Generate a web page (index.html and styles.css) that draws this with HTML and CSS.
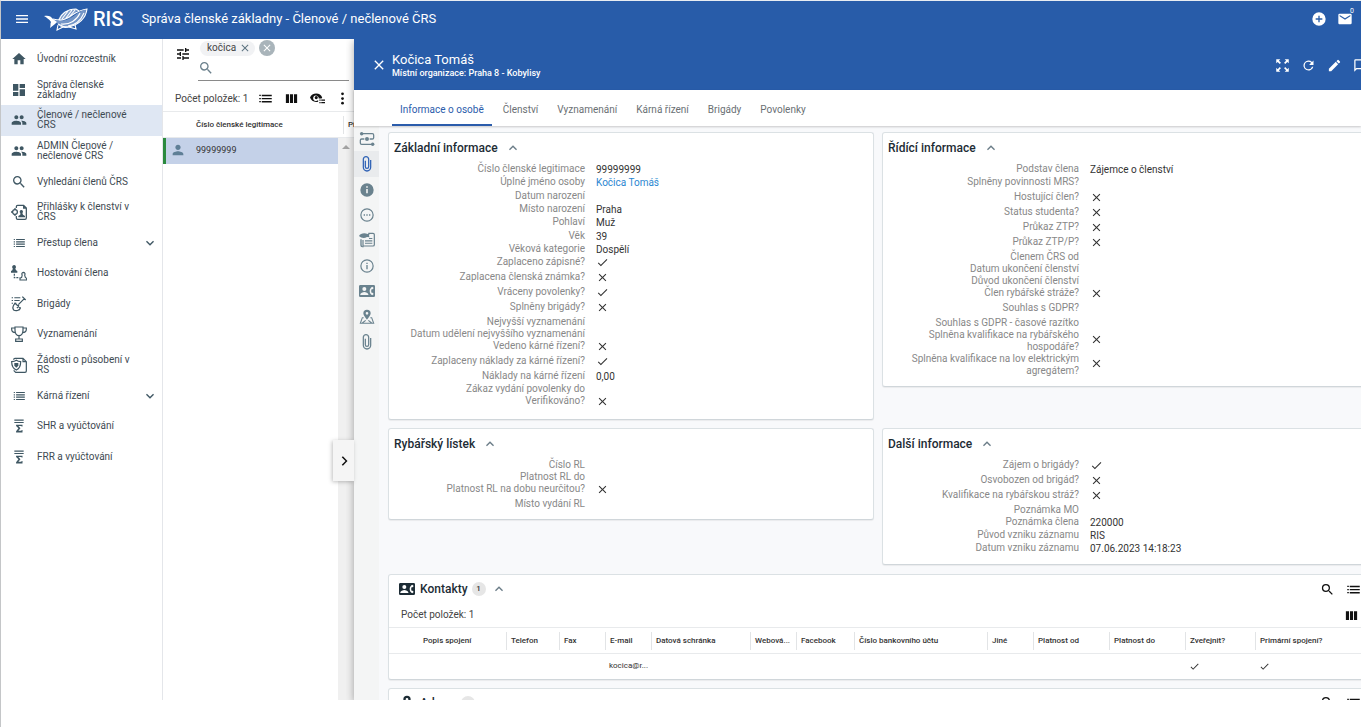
FILE: index.html
```html
<!DOCTYPE html>
<html lang="cs">
<head>
<meta charset="utf-8">
<title>RIS – Správa členské základny</title>
<link rel="stylesheet" href="styles.css">
</head>
<body>
<svg class="defs" aria-hidden="true">
  <symbol id="menu" viewBox="0 0 24 24"><path d="M3 18h18v-2H3v2zm0-5h18v-2H3v2zm0-7v2h18V6H3z"/></symbol>
  <symbol id="home" viewBox="0 0 24 24"><path d="M10 20v-6h4v6h5v-8h3L12 3 2 12h3v8z"/></symbol>
  <symbol id="dash" viewBox="0 0 24 24"><path d="M3 13h8V3H3v10zm0 8h8v-6H3v6zm10 0h8V11h-8v10zm0-18v6h8V3h-8z"/></symbol>
  <symbol id="people" viewBox="0 0 24 24"><path d="M16 11c1.66 0 2.99-1.34 2.99-3S17.66 5 16 5s-3 1.34-3 3 1.34 3 3 3zm-8 0c1.66 0 2.99-1.34 2.99-3S9.66 5 8 5 5 6.34 5 8s1.34 3 3 3zm0 2c-2.33 0-7 1.17-7 3.5V19h14v-2.5c0-2.33-4.67-3.5-7-3.5zm8 0c-.29 0-.62.02-.97.05 1.16.84 1.97 1.97 1.97 3.45V19h6v-2.5c0-2.33-4.67-3.5-7-3.5z"/></symbol>
  <symbol id="person" viewBox="0 0 24 24"><path d="M12 12c2.21 0 4-1.79 4-4s-1.79-4-4-4-4 1.79-4 4 1.79 4 4 4zm0 2c-2.67 0-8 1.34-8 4v2h16v-2c0-2.66-5.33-4-8-4z"/></symbol>
  <symbol id="search" viewBox="0 0 24 24"><path d="M15.5 14h-.79l-.28-.27A6.47 6.47 0 0 0 16 9.5 6.5 6.5 0 1 0 9.5 16c1.61 0 3.09-.59 4.23-1.57l.27.28v.79l5 4.99L20.490 19l-4.990-5zm-6 0C7.010 14 5 11.990 5 9.500S7.010 5 9.500 5 14 7.010 14 9.500 11.990 14 9.500 14z"/></symbol>
  <symbol id="list" viewBox="0 0 24 24"><path d="M3 5h2v2H3zM3 9h2v2H3zM3 13h2v2H3zM3 17h2v2H3zM7 5h15v2H7zM7 9h15v2H7zM7 13h15v2H7zM7 17h15v2H7z"/></symbol>
  <symbol id="rows" viewBox="0 0 24 24"><path d="M2 6h2.500v2H2zM2 11h2.500v2H2zM2 16h2.500v2H2zM6 6h16v2.200H6zM6 11h16v2.200H6zM6 16h16v2.200H6z"/></symbol>
  <symbol id="application" viewBox="0 0 24 24"><g fill="none" stroke="currentColor" stroke-width="1.900"><path d="M8 6V4a2 2 0 0 1 2-2h9l4 4v15a2 2 0 0 1-2 2H10a2 2 0 0 1-2-2v-3M19 2v4h4"/><circle cx="6" cy="12" r="3.600"/><path d="M6 6v3M6 15v3M0 12h3"/></g><path d="M15.500 9a2.500 2.500 0 0 1 1.500 4.500l1 2.500 3 2v2H11v-2l3-2v-2.500A2.500 2.500 0 0 1 15.500 9z"/></symbol>
  <symbol id="hosting" viewBox="0 0 24 24"><path d="M4.500 0a3 3 0 0 1 2 5.200L7.500 8l2 1v2.500H0V9l2-1 .7-2.800A3 3 0 0 1 4.500 0z"/><path d="M5 13v6h8" fill="none" stroke="currentColor" stroke-width="1.800" stroke-dasharray="3 1.500"/><path d="M18.500 11a2.500 2.500 0 0 1 2 4l1 3.500 2 1.500v2.500h-10V20l2.500-1.500.8-3.500a2.500 2.500 0 0 1 1.700-4z" fill="none" stroke="currentColor" stroke-width="1.700"/></symbol>
  <symbol id="shovel" viewBox="0 0 24 24"><path d="M1 2h2v1.500H1zM1 6h2v1.500H1zM1 10h2v1.500H1zM5 2h9v1.500H5zM5 6h8v1.500H5zM5 10h3v1.500H5z"/><g fill="none" stroke="currentColor" stroke-width="1.900"><path d="M17 1l5 5M20 4L11 13M6 11l8 7c-1 4-7 5-10 3-2-3-1-7 2-10zM9 18l3-4"/></g></symbol>
  <symbol id="trophy" viewBox="0 0 24 24"><g fill="none" stroke="currentColor" stroke-width="1.800"><path d="M6 1.500h12v5c0 5-3 8-6 8s-6-3-6-8zM6 3H1v2c0 3 2.500 5 6 5M18 3h5v2c0 3-2.500 5-6 5M12 14.500V19M7 23v-3.500h10V23z"/></g></symbol>
  <symbol id="shielddoc" viewBox="0 0 24 24"><g fill="none" stroke="currentColor" stroke-width="1.800"><path d="M4 4a2 2 0 0 1 2-2h12l5 5v14a2 2 0 0 1-2 2H7l-3-3M18 2v5h5"/><path d="M8 5c2 1.500 4 2 6.500 2 0 6-1 10-6.500 12.500C2.500 17 1 13 1 7c3 0 5-.5 7-2z"/></g><path d="M5 9h6v4l-3 3-3-3z"/></symbol>
  <symbol id="sum" viewBox="0 0 24 24"><path d="M4 1h16v2H4zM4 5h16v2H4zM7 10h11v3h-1.500l-.5-1H11l3.500 4-3.500 4h5l.6-1.300H18V23H7v-2l4-5-4-4.200z"/></symbol>
  <symbol id="down" viewBox="0 0 24 24"><path d="M7.410 8.590 12 13.170l4.590-4.580L18 10l-6 6-6-6z"/></symbol>
  <symbol id="up" viewBox="0 0 24 24"><path d="M7.410 15.410 12 10.830l4.590 4.580L18 14l-6-6-6 6z"/></symbol>
  <symbol id="right" viewBox="0 0 24 24"><path d="M7.500 4.500 15 12l-7.500 7.500L9.800 21.500 19 12 9.800 2.500z"/></symbol>
  <symbol id="close" viewBox="0 0 24 24"><path d="M19 6.410 17.590 5 12 10.590 6.410 5 5 6.410 10.590 12 5 17.590 6.410 19 12 13.410 17.590 19 19 17.590 13.410 12z"/></symbol>
  <symbol id="check" viewBox="0 0 24 24"><path d="M9 16.170 4.830 12l-1.420 1.410L9 19 21 7l-1.410-1.410z"/></symbol>
  <symbol id="tune" viewBox="0 0 24 24"><path d="M3 17v2h6v-2H3zM3 5v2h10V5H3zm10 16v-2h8v-2h-8v-2h-2v6h2zM7 9v2H3v2h4v2h2V9H7zm14 4v-2H11v2h10zm-6-4h2V7h4V5h-4V3h-2v6z"/></symbol>
  <symbol id="columns" viewBox="0 0 24 24"><path d="M3 5h5v14H3zM9.500 5h5v14h-5zM16 5h5v14h-5z"/></symbol>
  <symbol id="eye" viewBox="0 0 24 24"><path fill-rule="evenodd" d="M10 4c4.500 0 8 2.500 9.500 6.500l-1 1.500H14a4.500 4.500 0 1 0-1 2.500V17c-6 1.500-11-1-13-6.500C1.500 6.500 5.500 4 10 4zm0 4a2.500 2.500 0 1 1 0 5 2.500 2.500 0 0 1 0-5z"/><path d="M15 13.500h2v2h-2zM18 13.500h6v2h-6zM15 17.500h2v2h-2zM18 17.500h6v2h-6z"/></symbol>
  <symbol id="dots" viewBox="0 0 24 24"><circle cx="12" cy="4.500" r="2.200"/><circle cx="12" cy="12" r="2.200"/><circle cx="12" cy="19.500" r="2.200"/></symbol>
  <symbol id="plus" viewBox="0 0 24 24"><path d="M12 2a10 10 0 1 0 0 20 10 10 0 0 0 0-20zm5 11h-4v4h-2v-4H7v-2h4V7h2v4h4z"/></symbol>
  <symbol id="mail" viewBox="0 0 24 24"><path d="M20 4H4a2 2 0 0 0-2 2v12c0 1.100.9 2 2 2h16a2 2 0 0 0 2-2V6a2 2 0 0 0-2-2zm0 4-8 5-8-5V6l8 5 8-5z"/></symbol>
  <symbol id="expand" viewBox="0 0 24 24"><path d="M2 2h6.500L6.200 4.300l3.300 3.300-1.900 1.900-3.300-3.300L2 8.500zM22 2v6.500l-2.300-2.300-3.300 3.300-1.900-1.900 3.300-3.300L15.500 2zM2 22v-6.500l2.300 2.300 3.300-3.300 1.900 1.900-3.300 3.300L8.500 22zM22 22h-6.500l2.300-2.300-3.300-3.300 1.900-1.900 3.300 3.300 2.300-2.300z"/></symbol>
  <symbol id="refresh" viewBox="0 0 24 24"><path d="M17.650 6.350A8 8 0 1 0 19.730 14h-2.080A6 6 0 1 1 12 6c1.660 0 3.140.690 4.220 1.780L13 11h7V4z"/></symbol>
  <symbol id="edit" viewBox="0 0 24 24"><path d="M3 17.250V21h3.750L17.810 9.940l-3.750-3.750zM20.710 7.040a1 1 0 0 0 0-1.410l-2.340-2.340a1 1 0 0 0-1.410 0l-1.830 1.830 3.750 3.750z"/></symbol>
  <symbol id="chat" viewBox="0 0 24 24"><path d="M20 2H4a2 2 0 0 0-2 2v18l4-4h14a2 2 0 0 0 2-2V4a2 2 0 0 0-2-2zm0 14H5.200L4 17.200V4h16z"/></symbol>
  <symbol id="flow" viewBox="0 0 24 24"><g fill="none" stroke="currentColor" stroke-width="1.900"><path d="M6 4h14a2 2 0 0 1 2 2v4a2 2 0 0 1-2 2h-4M8 12H4a2 2 0 0 0-2 2v4a2 2 0 0 0 2 2h14"/></g><circle cx="4" cy="4" r="2.600"/><circle cx="20.500" cy="20" r="2.600"/><circle cx="12" cy="12" r="3"/></symbol>
  <symbol id="clip" viewBox="0 0 24 24"><path d="M17.500 6v11a5.500 5.500 0 0 1-11 0V5a4 4 0 0 1 8 0v11a2.500 2.500 0 0 1-5 0V7" fill="none" stroke="currentColor" stroke-width="1.900"/></symbol>
  <symbol id="info" viewBox="0 0 24 24"><path d="M12 2a10 10 0 1 0 0 20 10 10 0 0 0 0-20zm1.200 15h-2.400v-6.500h2.400zm0-8.500h-2.400V6.200h2.400z"/></symbol>
  <symbol id="infoo" viewBox="0 0 24 24"><circle cx="12" cy="12" r="9.200" fill="none" stroke="currentColor" stroke-width="1.800"/><path d="M11 10.500h2V17h-2zM11 7h2v2h-2z"/></symbol>
  <symbol id="more" viewBox="0 0 24 24"><circle cx="12" cy="12" r="9.200" fill="none" stroke="currentColor" stroke-width="1.800"/><path d="M7 11h2v2H7zM11 11h2v2h-2zM15 11h2v2h-2z"/></symbol>
  <symbol id="news" viewBox="0 0 24 24"><path d="M6 12v9h15a2 2 0 0 0 2-2V4a2 2 0 0 0-2-2h-7" fill="none" stroke="currentColor" stroke-width="1.800"/><path d="M0 6c2-4 8-5 13-3l3-1-1 4 1 2-4-.5C8 10 3 9 0 6zM15 9h5v1.600h-5zM9 12.500h11v1.700H9zM9 16h11v1.700H9zM2 11h2v9a2 2 0 0 0 3 1v2H5a3 3 0 0 1-3-3z"/></symbol>
  <symbol id="contact" viewBox="0 0 24 20"><path fill-rule="evenodd" d="M2 1h20a2 2 0 0 1 2 2v14a2 2 0 0 1-2 2H2a2 2 0 0 1-2-2V3c0-1.100.9-2 2-2zm6 3a3 3 0 1 0 0 6 3 3 0 0 0 0-6zm6 12v-1c0-2-4-3.500-6-3.500S2 13 2 15v1zm6.500-3.500L22 14.500 20 16.500c-2.800-1.500-4-4-4-6.500s1.200-5 4-6.500l2 2-1.500 2h-1.700a6 6 0 0 0 0 5z"/></symbol>
  <symbol id="pin" viewBox="0 0 24 24"><path fill-rule="evenodd" d="M12 1a5.500 5.500 0 0 1 5.500 5.500C17.500 10 12 16 12 16S6.500 10 6.500 6.500A5.500 5.500 0 0 1 12 1zm0 3.500a2 2 0 1 0 0 4 2 2 0 0 0 0-4z"/><path d="M7 13H5l-3 8.500h20L19 13h-2M5 21l5-4M19 21l-5-4" fill="none" stroke="currentColor" stroke-width="1.600"/></symbol>
</svg>

<div class="app">
  <header class="topbar">
    <button class="icon-btn" aria-label="Menu"><svg class="ic"><use href="#menu"/></svg></button>
    <div class="brand">
      <svg class="fish" viewBox="0 0 46 24" aria-hidden="true">
        <path d="M14 13c2-6 8-11 17-11l3 1-8 8-10 3z" fill="#fff" fill-opacity=".4"/>
        <path d="M10 13c4 1 8 1 12 0 7-2 12-9 21-11-1 9-8 16-19 18-4 0-7-1-10-3z" fill="#fff" fill-opacity=".35"/>
        <g fill="none" stroke="#fff" stroke-width="1.100">
          <path d="M9 12c4 1 8 2 12 0C28 9 33 3 43 2c-1 9-8 16-19 18-4 0-7-1-10-3"/>
          <path d="M15 13c2-6 8-11 17-11l3 2M18 12l6-8M22 11l6-8M26 9l5-6M14 18l-1 5 6-3M25 20l7 2-1-4"/>
          <path d="M17 17c9 1 16-4 19-11M24 19c8-1 13-6 16-13"/>
        </g>
        <path d="M0 9c4-1 7 0 9 3l4 3-2 2-5 4c1-3 0-4 1-6-2-3-4-4-7-6zM14 17c4 4 10 3 15 1-4 4-12 4-15-1z" fill="#fff"/>
      </svg>
      <span class="brand-name">RIS</span>
    </div>
    <h1 class="title">Správa členské základny - Členové / nečlenové ČRS</h1>
    <div class="top-actions">
      <button class="icon-btn" aria-label="Přidat"><svg class="ic"><use href="#plus"/></svg></button>
      <button class="icon-btn mail" aria-label="Zprávy"><svg class="ic"><use href="#mail"/></svg><span class="mail-count">0</span></button>
    </div>
  </header>

  <div class="main">
    <nav class="nav">
      <ul class="nav-list">
        <li><a class="nav-link" href="#"><svg class="ic"><use href="#home"/></svg><span>Úvodní rozcestník</span></a></li>
        <li><a class="nav-link" href="#"><svg class="ic"><use href="#dash"/></svg><span>Správa členské základny</span></a></li>
        <li><a class="nav-link active" href="#"><svg class="ic"><use href="#people"/></svg><span>Členové / nečlenové ČRS</span></a></li>
        <li><a class="nav-link" href="#"><svg class="ic"><use href="#people"/></svg><span>ADMIN Členové / nečlenové ČRS</span></a></li>
        <li><a class="nav-link" href="#"><svg class="ic"><use href="#search"/></svg><span>Vyhledání členů ČRS</span></a></li>
        <li><a class="nav-link" href="#"><svg class="ic"><use href="#application"/></svg><span>Přihlášky k členství v ČRS</span></a></li>
        <li><a class="nav-link" href="#"><svg class="ic sm"><use href="#list"/></svg><span>Přestup člena</span><svg class="ic arrow"><use href="#down"/></svg></a></li>
        <li><a class="nav-link" href="#"><svg class="ic"><use href="#hosting"/></svg><span>Hostování člena</span></a></li>
        <li><a class="nav-link" href="#"><svg class="ic"><use href="#shovel"/></svg><span>Brigády</span></a></li>
        <li><a class="nav-link" href="#"><svg class="ic"><use href="#trophy"/></svg><span>Vyznamenání</span></a></li>
        <li><a class="nav-link" href="#"><svg class="ic"><use href="#shielddoc"/></svg><span>Žádosti o působení v RS</span></a></li>
        <li><a class="nav-link" href="#"><svg class="ic sm"><use href="#list"/></svg><span>Kárná řízení</span><svg class="ic arrow"><use href="#down"/></svg></a></li>
        <li><a class="nav-link" href="#"><svg class="ic sm"><use href="#sum"/></svg><span>SHR a vyúčtování</span></a></li>
        <li><a class="nav-link" href="#"><svg class="ic sm"><use href="#sum"/></svg><span>FRR a vyúčtování</span></a></li>
      </ul>
    </nav>

    <section class="list">
      <div class="filter">
        <button class="icon-btn dark" aria-label="Filtr"><svg class="ic"><use href="#tune"/></svg></button>
        <div class="filter-body">
          <div class="chips">
            <span class="chip">kočica<button class="chip-x" aria-label="Odebrat"><svg class="ic"><use href="#close"/></svg></button></span>
            <button class="clear" aria-label="Vymazat filtr"><svg class="ic"><use href="#close"/></svg></button>
          </div>
          <label class="search-box"><svg class="ic"><use href="#search"/></svg><input class="search-input" type="text" aria-label="Hledat"></label>
        </div>
      </div>
      <div class="list-tools">
        <span class="count">Počet položek: 1</span>
        <button class="icon-btn dark" aria-label="Seznam"><svg class="ic"><use href="#rows"/></svg></button>
        <button class="icon-btn dark" aria-label="Sloupce"><svg class="ic"><use href="#columns"/></svg></button>
        <button class="icon-btn dark" aria-label="Zobrazení"><svg class="ic"><use href="#eye"/></svg></button>
        <button class="icon-btn dark" aria-label="Více"><svg class="ic"><use href="#dots"/></svg></button>
      </div>
      <div class="list-head"><span class="head-num">Číslo členské legitimace</span><span class="head-next">Příjmení</span></div>
      <div class="list-body">
        <div class="list-rows"><div class="list-row"><svg class="ic"><use href="#person"/></svg><span>99999999</span></div></div>
        <div class="scroll"><span class="scroll-up"></span></div>
      </div>
      <button class="toggle" aria-label="Rozbalit"><svg class="ic"><use href="#right"/></svg></button>
    </section>

    <section class="detail">
      <header class="detail-head">
        <button class="icon-btn" aria-label="Zavřít"><svg class="ic"><use href="#close"/></svg></button>
        <div class="detail-titles">
          <h2 class="detail-name">Kočica Tomáš</h2>
          <p class="detail-org">Místní organizace: Praha 8 - Kobylisy</p>
        </div>
        <div class="detail-actions">
          <button class="icon-btn" aria-label="Celá obrazovka"><svg class="ic"><use href="#expand"/></svg></button>
          <button class="icon-btn" aria-label="Obnovit"><svg class="ic"><use href="#refresh"/></svg></button>
          <button class="icon-btn" aria-label="Upravit"><svg class="ic"><use href="#edit"/></svg></button>
          <button class="icon-btn" aria-label="Komentáře"><svg class="ic"><use href="#chat"/></svg></button>
        </div>
      </header>
      <div class="tabs">
        <button class="tab on">Informace o osobě</button>
        <button class="tab">Členství</button>
        <button class="tab">Vyznamenání</button>
        <button class="tab">Kárná řízení</button>
        <button class="tab">Brigády</button>
        <button class="tab">Povolenky</button>
      </div>
      <div class="detail-main">
        <div class="rail">
          <div class="rail-list">
            <button class="rail-btn" aria-label="Proces"><svg class="ic"><use href="#flow"/></svg></button>
            <button class="rail-btn on" aria-label="Přílohy"><svg class="ic"><use href="#clip"/></svg></button>
            <button class="rail-btn" aria-label="Základní"><svg class="ic"><use href="#info"/></svg></button>
            <button class="rail-btn" aria-label="Další"><svg class="ic"><use href="#more"/></svg></button>
            <button class="rail-btn" aria-label="Rybářský lístek"><svg class="ic"><use href="#news"/></svg></button>
            <button class="rail-btn" aria-label="Informace"><svg class="ic"><use href="#infoo"/></svg></button>
            <button class="rail-btn" aria-label="Kontakty"><svg class="ic"><use href="#contact"/></svg></button>
            <button class="rail-btn" aria-label="Adresy"><svg class="ic"><use href="#pin"/></svg></button>
            <button class="rail-btn" aria-label="Soubory"><svg class="ic"><use href="#clip"/></svg></button>
          </div>
        </div>
        <div class="content">
          <div class="grid">
            <article class="card">
              <h3 class="card-title">Základní informace<svg class="ic"><use href="#up"/></svg></h3>
              <dl class="props">
                <div class="row"><dt>Číslo členské legitimace</dt><dd>99999999</dd></div>
                <div class="row tall"><dt>Úplné jméno osoby</dt><dd><a class="link" href="#">Kočica Tomáš</a></dd></div>
                <div class="row"><dt>Datum narození</dt><dd></dd></div>
                <div class="row"><dt>Místo narození</dt><dd>Praha</dd></div>
                <div class="row tall"><dt>Pohlaví</dt><dd>Muž</dd></div>
                <div class="row"><dt>Věk</dt><dd>39</dd></div>
                <div class="row"><dt>Věková kategorie</dt><dd>Dospělí</dd></div>
                <div class="row flag"><dt>Zaplaceno zápisné?</dt><dd><svg class="ic"><use href="#check"/></svg></dd></div>
                <div class="row flag"><dt>Zaplacena členská známka?</dt><dd><svg class="ic"><use href="#close"/></svg></dd></div>
                <div class="row flag"><dt>Vráceny povolenky?</dt><dd><svg class="ic"><use href="#check"/></svg></dd></div>
                <div class="row flag"><dt>Splněny brigády?</dt><dd><svg class="ic"><use href="#close"/></svg></dd></div>
                <div class="row none"><dt>Nejvyšší vyznamenání</dt><dd></dd></div>
                <div class="row none"><dt>Datum udělení nejvyššího vyznamenání</dt><dd></dd></div>
                <div class="row flag"><dt>Vedeno kárné řízení?</dt><dd><svg class="ic"><use href="#close"/></svg></dd></div>
                <div class="row flag"><dt>Zaplaceny náklady za kárné řízení?</dt><dd><svg class="ic"><use href="#check"/></svg></dd></div>
                <div class="row"><dt>Náklady na kárné řízení</dt><dd>0,00</dd></div>
                <div class="row none"><dt>Zákaz vydání povolenky do</dt><dd></dd></div>
                <div class="row flag"><dt>Verifikováno?</dt><dd><svg class="ic"><use href="#close"/></svg></dd></div>
              </dl>
            </article>
            <article class="card">
              <h3 class="card-title">Řídící informace<svg class="ic"><use href="#up"/></svg></h3>
              <dl class="props">
                <div class="row"><dt>Podstav člena</dt><dd>Zájemce o členství</dd></div>
                <div class="row flag"><dt>Splněny povinnosti MRS?</dt><dd></dd></div>
                <div class="row flag"><dt>Hostující člen?</dt><dd><svg class="ic"><use href="#close"/></svg></dd></div>
                <div class="row flag"><dt>Status studenta?</dt><dd><svg class="ic"><use href="#close"/></svg></dd></div>
                <div class="row flag"><dt>Průkaz ZTP?</dt><dd><svg class="ic"><use href="#close"/></svg></dd></div>
                <div class="row flag"><dt>Průkaz ZTP/P?</dt><dd><svg class="ic"><use href="#close"/></svg></dd></div>
                <div class="row none"><dt>Členem ČRS od</dt><dd></dd></div>
                <div class="row none"><dt>Datum ukončení členství</dt><dd></dd></div>
                <div class="row none"><dt>Důvod ukončení členství</dt><dd></dd></div>
                <div class="row flag"><dt>Člen rybářské stráže?</dt><dd><svg class="ic"><use href="#close"/></svg></dd></div>
                <div class="row flag"><dt>Souhlas s GDPR?</dt><dd></dd></div>
                <div class="row none"><dt>Souhlas s GDPR - časové razítko</dt><dd></dd></div>
                <div class="row two"><dt>Splněna kvalifikace na rybářského hospodáře?</dt><dd><svg class="ic"><use href="#close"/></svg></dd></div>
                <div class="row two"><dt>Splněna kvalifikace na lov elektrickým agregátem?</dt><dd><svg class="ic"><use href="#close"/></svg></dd></div>
              </dl>
            </article>
            <article class="card">
              <h3 class="card-title">Rybářský lístek<svg class="ic"><use href="#up"/></svg></h3>
              <dl class="props">
                <div class="row none"><dt>Číslo RL</dt><dd></dd></div>
                <div class="row none"><dt>Platnost RL do</dt><dd></dd></div>
                <div class="row flag"><dt>Platnost RL na dobu neurčitou?</dt><dd><svg class="ic"><use href="#close"/></svg></dd></div>
                <div class="row none"><dt>Místo vydání RL</dt><dd></dd></div>
              </dl>
            </article>
            <article class="card">
              <h3 class="card-title">Další informace<svg class="ic"><use href="#up"/></svg></h3>
              <dl class="props">
                <div class="row flag"><dt>Zájem o brigády?</dt><dd><svg class="ic"><use href="#check"/></svg></dd></div>
                <div class="row flag"><dt>Osvobozen od brigád?</dt><dd><svg class="ic"><use href="#close"/></svg></dd></div>
                <div class="row flag"><dt>Kvalifikace na rybářskou stráž?</dt><dd><svg class="ic"><use href="#close"/></svg></dd></div>
                <div class="row none"><dt>Poznámka MO</dt><dd></dd></div>
                <div class="row"><dt>Poznámka člena</dt><dd>220000</dd></div>
                <div class="row"><dt>Původ vzniku záznamu</dt><dd>RIS</dd></div>
                <div class="row"><dt>Datum vzniku záznamu</dt><dd>07.06.2023 14:18:23</dd></div>
              </dl>
            </article>
          </div>

          <article class="card wide">
            <div class="wide-head">
              <h3 class="wide-title"><svg class="ic"><use href="#contact"/></svg>Kontakty</h3>
              <span class="badge">1</span>
              <svg class="ic fold"><use href="#up"/></svg>
              <div class="wide-actions">
                <button class="icon-btn dark" aria-label="Hledat"><svg class="ic"><use href="#search"/></svg></button>
                <button class="icon-btn dark" aria-label="Seznam"><svg class="ic"><use href="#rows"/></svg></button>
              </div>
            </div>
            <div class="wide-tools">
              <span class="count">Počet položek: 1</span>
              <button class="icon-btn dark" aria-label="Sloupce"><svg class="ic"><use href="#columns"/></svg></button>
            </div>
            <table class="table">
              <colgroup><col class="w-desc"><col class="w-tel"><col class="w-fax"><col class="w-fax"><col class="w-box"><col class="w-fax"><col class="w-fb"><col class="w-bank"><col class="w-fax"><col class="w-date"><col class="w-date"><col class="w-pub"><col></colgroup>
              <thead><tr><th><span>Popis spojení</span></th><th><span>Telefon</span></th><th><span>Fax</span></th><th><span>E-mail</span></th><th><span>Datová schránka</span></th><th><span>Webová...</span></th><th><span>Facebook</span></th><th><span>Číslo bankovního účtu</span></th><th><span>Jiné</span></th><th><span>Platnost od</span></th><th><span>Platnost do</span></th><th><span>Zveřejnit?</span></th><th><span>Primární spojení?</span></th></tr></thead>
              <tbody><tr><td></td><td></td><td></td><td>kocica@r...</td><td></td><td></td><td></td><td></td><td></td><td></td><td></td><td><svg class="ic"><use href="#check"/></svg></td><td><svg class="ic"><use href="#check"/></svg></td></tr></tbody>
            </table>
          </article>

          <article class="card wide">
            <div class="wide-head">
              <h3 class="wide-title"><svg class="ic"><use href="#pin"/></svg>Adresy</h3>
              <span class="badge">1</span>
              <svg class="ic fold"><use href="#up"/></svg>
              <div class="wide-actions">
                <button class="icon-btn dark" aria-label="Hledat"><svg class="ic"><use href="#search"/></svg></button>
                <button class="icon-btn dark" aria-label="Seznam"><svg class="ic"><use href="#rows"/></svg></button>
              </div>
            </div>
          </article>
        </div>
      </div>
    </section>
  </div>
</div>
</body>
</html>
```
FILE: styles.css
```css
* { box-sizing: border-box; }
body { margin: 0; font-family: Roboto, "Liberation Sans", sans-serif; font-size: 10px; line-height: 12px; color: #333; background: #fff; }
h1, h2, h3, p, ul, dl, dd { margin: 0; padding: 0; }
ul { list-style: none; }
a { color: inherit; text-decoration: none; }
button { border: 0; padding: 0; margin: 0; background: none; font: inherit; color: inherit; cursor: pointer; }
.defs { position: absolute; width: 0; height: 0; }
.ic { width: 16px; height: 16px; fill: currentColor; flex: none; display: block; }
.icon-btn { width: 26px; height: 26px; display: flex; align-items: center; justify-content: center; flex: none; }
.dark { color: #111; }

.app { height: 100vh; padding-bottom: 27px; display: flex; flex-direction: column; overflow: hidden; border-left: 1px solid #c4c6c8; border-top: 1px solid #e8ecf2; }
.topbar { flex: none; height: 38px; display: flex; align-items: center; background: #285ca9; color: #fff; padding: 0 3px 3px 8px; }
.brand { display: flex; align-items: center; margin-left: 9px; gap: 3px; }
.fish { width: 46px; height: 24px; }
.brand-name { font-size: 20px; line-height: 24px; font-weight: 500; }
.title { font-size: 13px; line-height: 16px; font-weight: 400; margin-left: 18px; }
.top-actions { margin-left: auto; display: flex; }
.mail { position: relative; }
.mail-count { position: absolute; right: 4px; top: 1px; font-size: 7px; line-height: 8px; }

.main { flex: 1; min-height: 0; display: flex; }
.nav { width: 162px; flex: none; border-right: 1px solid #e4e6ea; }
.nav-list { display: grid; grid-auto-rows: 1fr; min-height: 428px; padding: 0; margin-top: 5px; }
.nav-link { height: 100%; display: flex; align-items: center; gap: 10px; padding: 0 4px 0 10px; color: #3e4a52; line-height: 10px; }
.nav-link .ic { color: #3f5763; }
.nav-link .sm { padding: 1px; }
.nav-link span { max-width: 100px; }
.nav-link .arrow { margin-left: auto; }
.nav-link.active { background: #dfe7f3; }

.list { width: 191px; flex: none; display: flex; flex-direction: column; position: relative; }
.filter { display: flex; padding: 1px 5px 0 7px; gap: 2px; }
.filter .icon-btn { margin-top: 1px; }
.filter-body { flex: 1; }
.chips { display: flex; align-items: center; gap: 4px; padding-left: 2px; }
.chip { display: flex; align-items: center; gap: 3px; height: 15px; padding: 0 4px 0 7px; border-radius: 8px; background: #f1f2f4; color: #444; }
.chip-x .ic { width: 12px; height: 12px; color: #5d7380; }
.clear { width: 16px; height: 16px; border-radius: 50%; background: #a9b4ba; color: #fff; display: flex; align-items: center; justify-content: center; }
.clear .ic { width: 12px; height: 12px; }
.search-box { display: flex; align-items: center; height: 25px; border-bottom: 1px solid #8a8a8a; color: #6b808c; }
.search-input { border: 0; outline: 0; background: none; width: 100%; font: inherit; }
.list-tools { display: flex; align-items: center; height: 30px; padding: 5px 0 0 12px; color: #555; }
.list-tools .ic { width: 15px; height: 15px; }
.count { flex: 1; white-space: nowrap; color: #444; }
.list-tools .icon-btn:last-child { width: 24px; }
.list-head { display: flex; align-items: center; height: 27px; border-top: 1px solid #e8eaec; border-bottom: 1px solid #e8eaec; font-size: 8px; font-weight: 500; overflow: hidden; }
.head-num { flex: none; width: 181px; padding-left: 33px; line-height: 18px; border-right: 1px solid #e2e4e6; }
.head-next { padding-left: 4px; }
.list-body { flex: 1; display: flex; }
.list-rows { flex: 1; }
.list-row { display: flex; align-items: center; gap: 10px; height: 26px; padding: 0 0 2px 4px; border-left: 3px solid #2b8a3e; background: #c4d1e8; font-size: 9px; }
.list-row .ic { color: #5f7f96; }
.scroll { width: 16px; background: #f0f0f0; display: flex; justify-content: center; }
.scroll-up { width: 0; height: 0; margin-top: 7px; border: 4px solid transparent; border-top: 0; border-bottom-color: #a3a3a3; align-self: flex-start; }
.toggle { position: absolute; right: 0; bottom: 219px; width: 21px; height: 41px; background: #f5f5f5; box-shadow: -1px 1px 4px rgba(0,0,0,.25); display: flex; align-items: center; justify-content: center; color: #111; z-index: 1; }
.toggle .ic { width: 12px; height: 12px; }

.detail { flex: 1; min-width: 0; display: flex; flex-direction: column; position: relative; background: #f8f9fb; box-shadow: 0 2px 8px rgba(0,0,0,.35); clip-path: inset(0 0 0 -8px); }
.detail-head { flex: none; height: 51px; display: flex; align-items: center; background: #285ca9; color: #fff; padding: 1px 0 0 12px; overflow: hidden; }
.detail-name { font-size: 13px; line-height: 15px; font-weight: 400; }
.detail-org { font-size: 9px; line-height: 12px; font-weight: 500; }
.detail-actions { margin-left: auto; margin-right: -12px; display: flex; }
.detail-actions .ic { width: 15px; height: 15px; }
.tabs { flex: none; display: flex; height: 36px; padding-left: 38px; gap: 3px; background: #fff; box-shadow: 0 1px 2px rgba(0,0,0,.2); z-index: 1; }
.tab { padding: 6px 8px 0; color: #6a6f73; border-bottom: 2px solid transparent; white-space: nowrap; }
.tab.on { color: #2b5cab; border-color: #2b5cab; }
.detail-main { flex: 1; min-height: 0; display: flex; overflow: hidden; }
.rail { width: 25px; flex: none; background: #f4f5f5; }
.rail-list { display: grid; grid-auto-rows: 1fr; min-height: 229px; }
.rail-btn { display: flex; align-items: center; justify-content: center; color: #6a828e; }
.rail-btn.on { background: #e9ebed; color: #2f62b5; }
.content { flex: 1; min-width: 0; padding: 6px 0 0 9px; margin-right: -7px; }
.grid { display: grid; grid-template-columns: 1fr 1fr; gap: 8px; align-items: start; }
.card { background: #fff; border: 1px solid #dbe1e4; border-bottom-color: #d0d6da; border-radius: 3px; box-shadow: 0 1px 1px rgba(0,0,0,.06); padding-bottom: 9px; }
.card-title { display: flex; align-items: center; gap: 7px; height: 30px; padding: 0 0 0 5px; font-size: 12px; line-height: 16px; font-weight: 500; color: #1d2c35; }
.card-title .ic { color: #6b7d88; }
.row { display: grid; grid-template-columns: 40% 1fr; gap: 11px; min-height: 13px; padding: 0 0 0 4px; }
.row.tall { min-height: 14px; }
.row.flag { min-height: 15px; }
.row.none { min-height: 12px; }
.row dt { text-align: right; color: #888; line-height: 12px; }
.row dd { color: #333; line-height: 13px; min-width: 0; }
.row dd .ic { width: 13px; height: 13px; }
.row.two dd { align-self: center; padding-bottom: 3px; }
.link { color: #2a86d1; }

.wide { margin-top: 9px; padding-bottom: 0; }
.wide + .wide { margin-top: 8px; }
.wide-head { display: flex; align-items: center; height: 28px; padding: 0 1px 0 10px; }
.wide-title { display: flex; align-items: center; gap: 5px; font-size: 12px; line-height: 16px; font-weight: 500; color: #1d2c35; }
.badge { min-width: 14px; height: 14px; margin: 0 5px 0 4px; border-radius: 7px; background: #e6e6e6; text-align: center; font-size: 8px; font-weight: 500; line-height: 14px; }
.fold { color: #6b7d88; }
.wide-actions { margin-left: auto; display: flex; }
.wide-tools { display: flex; align-items: center; height: 24px; padding: 0 3px 0 12px; }
.wide-actions .ic, .wide-tools .ic { width: 15px; height: 15px; }
.table { width: 100%; table-layout: fixed; border-collapse: collapse; font-size: 8px; color: #333; }
.table th, .table td { height: 26px; padding: 0; text-align: left; white-space: nowrap; overflow: hidden; }
.table thead { border-top: 1px solid #e8eaec; border-bottom: 1px solid #e8eaec; }
.table th { font-weight: 500; }
.table th span { display: block; padding-left: 4px; line-height: 18px; border-left: 1px solid #e2e4e6; }
.table th:first-child span { padding-left: 33px; border-left-color: transparent; }
.table td { padding-left: 4px; height: 25px; }
.table td .ic { width: 11px; height: 11px; }
.w-desc { width: 117px; }
.w-tel { width: 53px; }
.w-fax { width: 46px; }
.w-box { width: 99px; }
.w-fb { width: 58px; }
.w-bank { width: 133px; }
.w-date { width: 76px; }
.w-pub { width: 70px; }
```
